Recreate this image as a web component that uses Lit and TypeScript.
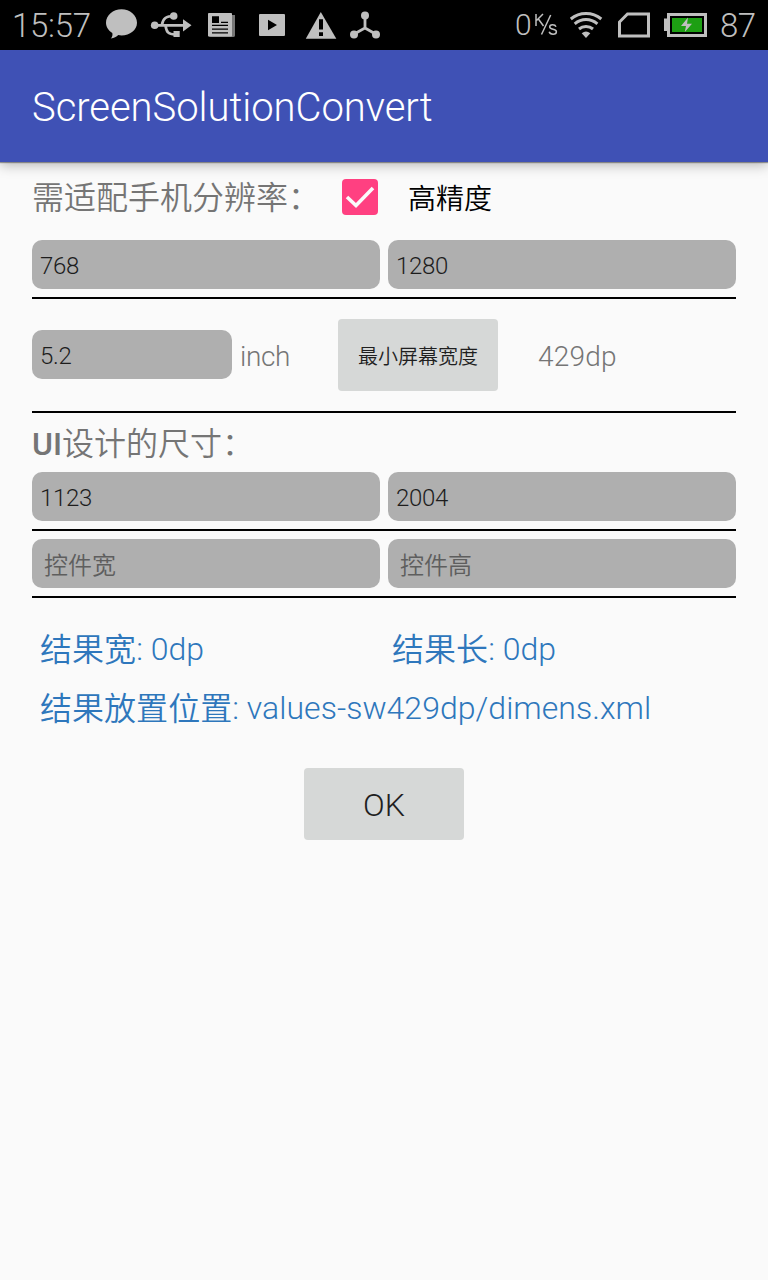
import { LitElement, html, css } from "lit";
import { customElement, property } from "lit/decorators.js";

const fonts = css`
  :host {
    font-family: Roboto, "Noto Sans CJK SC", sans-serif;
    font-weight: 300;
  }
  .cjk { font-family: "Noto Sans CJK SC DemiLight", "Noto Sans CJK SC", sans-serif; font-weight: 350; }
`;

@customElement("status-bar")
class StatusBar extends LitElement {
  static styles = [fonts, css`
    :host { display: block; }
    .bar { display: flex; height: 50px; background: #000; color: #bfbfbf; justify-content: space-between; }
    .group { display: flex; height: 50px; }
    .time, .level, .rate { line-height: 50px; white-space: nowrap; padding-top: 1px; }
    .time { width: 87px; margin-left: 12px; font-size: 33px; letter-spacing: -0.3px; box-sizing: border-box; }
    .level { width: 48px; margin-left: 2px; font-size: 33px; letter-spacing: -0.6px; box-sizing: border-box; }
    .rate { font-size: 30px; width: 19px; padding-top: 0; }
    svg { display: block; flex: none; }
  `];
  render() {
    return html`
      <div class="bar">
        <div class="group">
          <div class="time">15:57</div>
          <svg width="300" height="50" viewBox="99 0 300 50" fill="#bfbfbf">
            <path d="M121.5 9.3C130 9.3 137 15.3 137 22.7C137 30 130 35.4 121.5 35.4L118.3 35.1C116.5 36.8 114 38.4 110.8 38.5C112.5 36.8 112.7 34.8 112.3 32.9C108.5 30.6 106 27 106 22.7C106 15.3 113 9.3 121.5 9.3Z"/>
            <circle cx="154.7" cy="25.3" r="3.8"/>
            <path d="M183 19.2L191.5 25.3L183 31.5Z"/>
            <circle cx="173.7" cy="16" r="3.8"/>
            <rect x="173.5" y="31" width="6.2" height="6"/>
            <g fill="none" stroke="#bfbfbf" stroke-width="2.7">
              <path d="M154 25.3H184M162 24.5C163 18.5 166 16 174 16M165.5 25.5C166.5 32 168 34.5 175 34.5"/>
            </g>
            <path fill="#777" d="M231 15H235V35.5Q235 37 233 37H211Q208 37 208 34Z"/>
            <rect x="208" y="13" width="24" height="23.5" rx=".8"/>
            <path fill="#000" d="M212 16.2H219V23H212ZM221 21.7H228V23H221ZM212 24.8H228V26H212ZM212 28.5H228V29.7H212ZM212 32.2H228V33.4H212Z"/>
            <path fill-rule="evenodd" d="M260 14H284Q285 14 285 15V35Q285 36 284 36H260Q259 36 259 35V15Q259 14 260 14ZM268 19.7V30.3L277 25Z"/>
            <path d="M320.8 12L336.3 38.7H305.8Z"/>
            <path fill="#000" d="M319 19.3H323V29.5H319ZM319 32.2H323V36H319Z"/>
            <path d="M365 15V28L353.8 34.3M365 28L376 34.3" fill="none" stroke="#bfbfbf" stroke-width="2.8"/>
            <circle cx="365" cy="15.4" r="4"/><circle cx="354" cy="34.5" r="4"/><circle cx="376" cy="34.5" r="4"/>
          </svg>
        </div>
        <div class="group">
          <div class="rate">0</div>
          <svg width="184" height="50" viewBox="534 0 184 50" fill="#bfbfbf">
            <g fill="none" stroke="#bfbfbf" stroke-width="1.5">
              <path d="M536 14V26M543 14L536.5 20.5M538.2 18.8L543.5 26M550.7 15L541.5 34.5"/>
              <path d="M556 26.7C555 24 549.7 24 549.7 27C549.7 30 556.4 28.7 556.4 31.7C556.4 35 550 35 549.2 31.8"/>
            </g>
            <g fill="none" stroke="#bfbfbf" stroke-width="3">
              <path d="M570.8 19C579.5 11.7 592.5 11.7 601.3 19"/>
              <path d="M574.7 23.8C581.5 18.2 590.5 18.2 597.4 23.8"/>
              <path d="M579 29C583 25.7 589 25.7 593 29"/>
            </g>
            <path d="M581.7 33.3Q586 29.9 590.3 33.3L586 38Z"/>
            <path d="M627.5 14H648.5V36H619.5V22Z" fill="none" stroke="#bfbfbf" stroke-width="3"/>
            <rect x="664" y="18.5" width="4" height="12.5"/>
            <rect x="668.5" y="14.5" width="37" height="21" fill="#000" stroke="#bfbfbf" stroke-width="3"/>
            <rect x="672" y="18" width="30" height="14" fill="#1d9f13"/>
            <path d="M688 17.5L681 26H686L684.8 32L692 23.7H687Z"/>
          </svg>
          <div class="level">87</div>
        </div>
      </div>`;
  }
}

@customElement("text-field")
class TextField extends LitElement {
  @property() value = "";
  @property() hint = "";
  static styles = [fonts, css`
    :host { display: block; }
    .field { height: 49px; border-radius: 10px; background: #afafaf; padding: 2px 8px 0; box-sizing: border-box; font-size: 24px; line-height: 49px; color: #1d1d1d; letter-spacing: -0.3px; }
    .hint { color: #5e5e5e; padding: 0 12px; letter-spacing: 0; }
  `];
  render() {
    return this.value
      ? html`<div class="field">${this.value}</div>`
      : html`<div class="field hint cjk">${this.hint}</div>`;
  }
}

@customElement("app-root")
class AppRoot extends LitElement {
  static styles = [fonts, css`
    :host { display: block; }
    .screen { min-height: 1280px; background: #fafafa; color: #757575; display: flex; flex-direction: column; }
    .appbar { height: 112px; box-sizing: border-box; padding: 2px 32px 0; background: #3f51b5; color: #fff; font-size: 40px; letter-spacing: -0.05px; line-height: 112px; box-shadow: 0 1px 1px rgba(0,0,0,.35), 0 3px 12px rgba(0,0,0,.28); }
    .content { display: flex; flex-direction: column; padding: 0 32px; }
    .row { display: flex; align-items: center; }
    .top { height: 70px; margin-bottom: 8px; }
    .heading { font-size: 32px; line-height: 40px; white-space: nowrap; }
    .top .heading { width: 310px; padding-bottom: 4px; }
    .check { display: block; flex: none; margin-right: 30px; }
    .precise { color: #000; font-size: 28px; line-height: 40px; }
    .pair { display: grid; grid-template-columns: 1fr 1fr; column-gap: 8px; padding-bottom: 8px; }
    .rule { height: 2px; background: #000; }
    .device { height: 112px; }
    .size { width: 200px; margin-bottom: 2px; }
    .unit { width: 98px; padding: 3px 0 0 8px; font-size: 28px; line-height: 40px; letter-spacing: -0.4px; }
    .button { width: 160px; height: 72px; line-height: 72px; border-radius: 4px; background: #d6d8d7; color: #1f1f1f; text-align: center; }
    .measure { font-size: 20px; line-height: 74px; }
    .width { margin-left: 40px; padding-top: 3px; font-size: 28px; line-height: 40px; letter-spacing: 0.2px; }
    .design { height: 59px; line-height: 62px; }
    .latin { font-weight: 500; }
    .second { padding-top: 8px; }
    .results { display: grid; grid-template-columns: 352px 352px; padding: 22px 0 0 8px; color: #2e77bc; font-size: 32px; line-height: 59px; letter-spacing: 0.04px; white-space: nowrap; }
    .results .cjk, .design .cjk { line-height: 1; }
    .results .cjk { vertical-align: -1px; }
    .place { grid-column: 1 / -1; }
    .ok { align-self: center; margin-top: 30px; font-size: 32px; line-height: 74px; }
  `];
  render() {
    return html`
      <div class="screen">
        <status-bar></status-bar>
        <div class="appbar">ScreenSolutionConvert</div>
        <div class="content">
          <div class="row top">
            <div class="heading cjk">需适配手机分辨率：</div>
            <svg class="check" width="36" height="36" viewBox="0 0 36 36">
              <rect width="36" height="36" rx="4" fill="#ff4081"/>
              <path d="M5 18L14 26.5L31 9" fill="none" stroke="#fafafa" stroke-width="3.6"/>
            </svg>
            <div class="precise cjk">高精度</div>
          </div>
          <div class="pair"><text-field value="768"></text-field><text-field value="1280"></text-field></div>
          <div class="rule"></div>
          <div class="row device">
            <text-field class="size" value="5.2"></text-field>
            <div class="unit">inch</div>
            <div class="button measure cjk">最小屏幕宽度</div>
            <div class="width">429dp</div>
          </div>
          <div class="rule"></div>
          <div class="heading design"><span class="latin">UI</span><span class="cjk">设计的尺寸：</span></div>
          <div class="pair"><text-field value="1123"></text-field><text-field value="2004"></text-field></div>
          <div class="rule"></div>
          <div class="pair second"><text-field hint="控件宽"></text-field><text-field hint="控件高"></text-field></div>
          <div class="rule"></div>
          <div class="results">
            <div><span class="cjk">结果宽</span>: 0dp</div>
            <div><span class="cjk">结果长</span>: 0dp</div>
            <div class="place"><span class="cjk">结果放置位置</span>: values-sw429dp/dimens.xml</div>
          </div>
          <div class="button ok">OK</div>
        </div>
      </div>`;
  }
}
